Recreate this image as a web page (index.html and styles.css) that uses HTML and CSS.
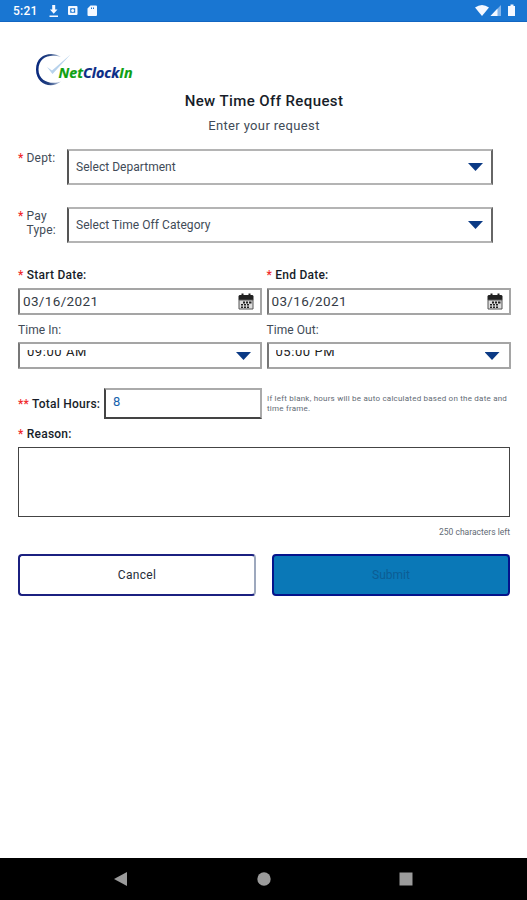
FILE: index.html
```html
<!DOCTYPE html>
<html lang="en">
<head>
<meta charset="utf-8">
<title>New Time Off Request</title>
<link rel="stylesheet" href="styles.css">
</head>
<body>
<header class="status">
  <span class="clock">5:21</span>
  <svg class="status-left" width="50" height="14" viewBox="0 0 50 14">
    <path d="M4.200 1h3v4.500h2.300L5.700 9.700 1.900 5.500h2.300zM1.500 11.500h8.500v1.500H1.500z"/>
    <path fill-rule="evenodd" d="M21 2h7.500q1 0 1 1v7q0 1-1 1H21q-1 0-1-1V3q0-1 1-1zM22.200 4.200v4.600h5V4.200z"/>
    <circle cx="24.700" cy="6.500" r="1.500"/>
    <path fill-rule="evenodd" d="M42.500 1.500h5.500q1 0 1 1v8.500q0 1-1 1h-7.500q-1 0-1-1V4.500zM43 3.500v1.500h1v-1.500zm2 0v1.500h1v-1.500z"/>
  </svg>
  <svg class="status-right" width="42" height="14" viewBox="0 0 42 14">
    <path d="M0 3.500Q7 -1.500 14 3.500L7 12z"/>
    <path class="faint" d="M15.500 12L26 1v11z"/><path d="M15.500 12L22.500 4.600V12z"/>
    <path d="M34 2h1.500V.5h3V2H40v10h-7V2z"/>
  </svg>
</header>
<main>
  <svg class="logo" width="100" height="36" viewBox="0 0 100 36">
    <defs><linearGradient id="ring"><stop offset="0" stop-color="#07277e"/><stop offset=".5" stop-color="#23417f"/><stop offset="1" stop-color="#c3d0e2"/></linearGradient></defs>
    <path fill="url(#ring)" d="M26 5C17-1 1 2 1 17.500 1 33 17 37 26 29.500 17 33 3.500 30 3.500 17.500S15 1.500 26 5z"/>
    <path fill="#b7d2ec" d="M12 15l5 3.500L35.500 2.500 17.500 22z"/>
    <text class="brand" x="23.500" y="25.500" textLength="74" lengthAdjust="spacingAndGlyphs"><tspan class="green">Net</tspan><tspan class="navy">Clock</tspan><tspan class="green">In</tspan></text>
  </svg>
  <h1>New Time Off Request</h1>
  <p class="subtitle">Enter your request</p>

  <div class="pick-row">
    <label><b class="req">*</b><span>Dept:</span></label>
    <div class="select"><span>Select Department</span><i class="arrow"></i></div>
  </div>
  <div class="pick-row pay">
    <label><b class="req">*</b><span>Pay<br>Type:</span></label>
    <div class="select"><span class="category">Select Time Off Category</span><i class="arrow"></i></div>
  </div>

  <div class="dates">
    <section>
      <h2><b class="req">*</b> Start Date:</h2>
      <div class="date"><span>03/16/2021</span>
        <svg class="calendar" width="16" height="18" viewBox="0 0 16 18"><path d="M1.500 2h2V.5h2V2h5V.5h2V2h2l1 1v4H.5V3z"/><path class="page" d="M1 7h14v9H1z"/><path d="M5 8.500h2v2H5zm3 0h2v2H8zm3 0h2.500v2H11zM3 11h2v1.500H3zm3 0h2v1.500H6zm3 0h2v1.500H9zm-6 2.500h2V15H3zm3 0h2V15H6zm3 0h2V15H9z"/></svg>
      </div>
      <h3>Time In:</h3>
      <div class="time"><div class="clip"><span>09:00 AM</span></div><i class="arrow"></i></div>
    </section>
    <section>
      <h2><b class="req">*</b> End Date:</h2>
      <div class="date"><span>03/16/2021</span>
        <svg class="calendar" width="16" height="18" viewBox="0 0 16 18"><path d="M1.500 2h2V.5h2V2h5V.5h2V2h2l1 1v4H.5V3z"/><path class="page" d="M1 7h14v9H1z"/><path d="M5 8.500h2v2H5zm3 0h2v2H8zm3 0h2.500v2H11zM3 11h2v1.500H3zm3 0h2v1.500H6zm3 0h2v1.500H9zm-6 2.500h2V15H3zm3 0h2V15H6zm3 0h2V15H9z"/></svg>
      </div>
      <h3>Time Out:</h3>
      <div class="time"><div class="clip"><span>05:00 PM</span></div><i class="arrow"></i></div>
    </section>
  </div>

  <div class="hours">
    <h2><b class="req">**</b> Total Hours:</h2>
    <div class="amount">8</div>
    <p>If left blank, hours will be auto calculated based on the date and<br>time frame.</p>
  </div>

  <h2 class="reason-label"><b class="req">*</b> Reason:</h2>
  <div class="reason"></div>
  <p class="left">250 characters left</p>

  <div class="actions">
    <button class="cancel">Cancel</button>
    <button class="submit">Submit</button>
  </div>
</main>
<footer>
  <svg width="14" height="16" viewBox="0 0 14 16"><path d="M0 8L13 1v14z"/></svg>
  <svg width="14" height="16" viewBox="0 0 14 16"><circle cx="7" cy="8" r="6.700"/></svg>
  <svg width="14" height="16" viewBox="0 0 14 16"><path d="M.5 1.500h13v13H.5z"/></svg>
</footer>
</body>
</html>
```
FILE: styles.css
```css
* { box-sizing: border-box; }
body {
  margin: 0;
  height: 900px;
  display: flex;
  flex-direction: column;
  overflow: hidden;
  background: #fff;
  color: #414b57;
  font: 12px/14px Roboto, sans-serif;
}
h1, h2, h3, p { margin: 0; }
svg { display: block; flex: none; }

.status {
  height: 22px;
  padding: 0 10px 0 13px;
  display: flex;
  align-items: center;
  background: #1976d2;
  border-bottom: 1px solid #1266c2;
  color: #fff;
}
.status svg { fill: #f4f8ff; }
.clock { width: 35px; font-size: 12px; font-weight: 500; letter-spacing: .2px; }
.status-right { margin-left: auto; }
.status .faint { fill: #83b5eb; }

main { flex: 1; padding: 29px 17px 0 18px; }
.logo { margin-left: 17px; margin-top: 1px; }
.brand { font: italic bold 14px "Open Sans", sans-serif; }
.green { fill: #0da010; stroke: #0da010; stroke-width: .2px; }
.navy { fill: #0b2c86; stroke: #0b2c86; stroke-width: .2px; }

h1 {
  margin-top: 4px;
  height: 18px;
  text-align: center;
  font-size: 15px;
  font-weight: 500;
  line-height: 18px;
  letter-spacing: .4px;
  color: #171d29;
}
.subtitle {
  margin-top: 8px;
  text-align: center;
  font-size: 13px;
  line-height: 16px;
  letter-spacing: .35px;
}
.req { color: #f02a2a; font-weight: 500; }

.pick-row { display: flex; height: 36px; margin-top: 15px; }
.pay { margin-top: 22px; }
.pick-row label { display: flex; width: 49px; padding-top: 2px; gap: 3px; letter-spacing: .2px; flex: none; }
.select {
  width: 426px;
  display: flex;
  align-items: center;
  justify-content: space-between;
  padding: 0 8px 0 7px;
  border: 2px solid #b4b4b4;
  border-left-color: #555;
  border-right-color: #666;
  letter-spacing: .03px;
}
.category { letter-spacing: .05px; }
.arrow { width: 15px; height: 8px; background: #0b3a85; clip-path: polygon(0 0, 100% 0, 50% 100%); }

.dates { display: grid; grid-template-columns: 244px 244px; gap: 4.500px; margin-top: 25px; }
h2 { font-size: 12px; line-height: 14px; font-weight: 500; color: #171d29; letter-spacing: .23px; }
.date, .time {
  height: 27px;
  border: 2px solid #a5a5a5;
  border-left-color: #777;
  border-radius: 1px;
  display: flex;
  justify-content: space-between;
}
.date { margin-top: 6px; padding: 0 6px 2px 3px; align-items: center; font-size: 13.500px; letter-spacing: .35px; color: #343b45; }
.calendar { fill: #222; margin-top: 2px; }
.calendar .page { fill: #ddd; stroke: #555; stroke-width: 1; }
h3 { margin-top: 8px; font-size: 12px; line-height: 14px; font-weight: 400; letter-spacing: .05px; }
.time { margin-top: 5px; padding: 6px 9px 0 7px; }
.time .arrow { margin-top: 2px; }
.clip { height: 7px; overflow: hidden; display: flex; align-items: flex-end; color: #222; font-size: 13px; }
.clip span { height: 8px; line-height: 1px; padding-top: 2px; letter-spacing: .55px; }

.hours { display: flex; margin-top: 19px; height: 31px; align-items: center; }
.hours h2 { width: 86px; white-space: nowrap; }
.amount { width: 158px; height: 31px; border: 2px solid #aaa; border-left-color: #444; border-bottom-color: #444; padding: 5px 7px; font-size: 13px; color: #1763ad; }
.hours p { margin-left: 5px; font-size: 8px; line-height: 10px; letter-spacing: .22px; white-space: nowrap; color: #626a74; }
.reason-label { margin-top: 8px; }
.reason { margin-top: 6px; height: 70px; border: 1.500px solid #444; }
.left { margin-top: 10px; text-align: right; font-size: 8.500px; line-height: 10px; color: #626a74; }
.actions { display: grid; grid-template-columns: 238px 238px; gap: 16px; margin-top: 17px; }
button { height: 42px; padding: 0; border: 2px solid #1b2080; border-radius: 4px; font: 12px/14px Roboto, sans-serif; }
.cancel { background: #fff; color: #252d38; border-right-color: #9da8bd; letter-spacing: .3px; }
.submit { background: #0a78b7; color: #0c5d94; border-color: #05148b; }

footer { height: 42px; background: #000; display: flex; justify-content: space-between; align-items: center; padding: 0 114px 0 114px; }
footer svg { fill: #9b9b9b; }
```
